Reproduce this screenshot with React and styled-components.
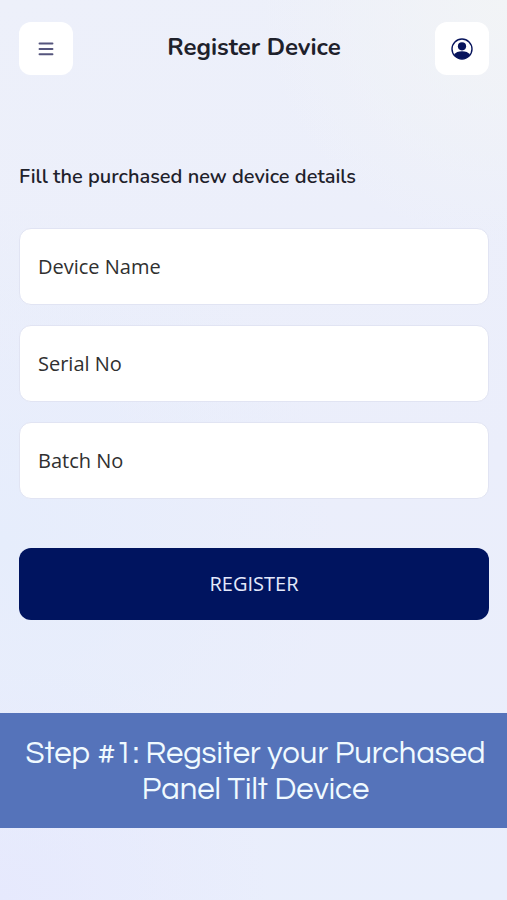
import React from "react";
import styled, { createGlobalStyle } from "styled-components";

const GlobalStyle = createGlobalStyle`
  *, *::before, *::after { box-sizing: border-box; }
  body { margin: 0; background: #e9edfb; }
  button, input { font: inherit; }
`;

const Page = styled.div`
  min-height: 100vh;
  display: flex;
  flex-direction: column;
  font-family: "Open Sans", "Noto Sans", sans-serif;
  color: #1e212b;
  background:
    radial-gradient(circle at 100% 0%, #f2f4f6 0%, rgba(242, 244, 246, 0) 24%),
    radial-gradient(circle at 0% 60%, #e6edfc 0%, rgba(230, 237, 252, 0) 45%),
    radial-gradient(circle at 0% 100%, #e6e9fd 0%, rgba(230, 233, 253, 0) 26%),
    linear-gradient(170deg, #edf0fa 0%, #ebeefb 55%, #e9eefc 100%);
`;

const Header = styled.header`
  display: flex;
  align-items: center;
  justify-content: space-between;
  padding: 22px 18px 0 19px;
`;

const IconButton = styled.button`
  display: grid;
  place-items: center;
  width: 54px;
  height: 53px;
  padding: 0;
  border: 0;
  border-radius: 12px;
  background: #fff;
  color: ${({ $color }) => $color};
  cursor: pointer;
`;

const Title = styled.h1`
  margin: 0 0 4px;
  font-family: Nunito, "Open Sans", sans-serif;
  font-size: 24px;
  line-height: 32px;
  font-weight: 700;
`;

const Form = styled.form`
  display: flex;
  flex-direction: column;
  padding: 88px 18px 0 19px;
`;

const FormTitle = styled.h2`
  margin: 0 0 37px;
  font-family: Nunito, "Open Sans", sans-serif;
  font-size: 20px;
  line-height: 28px;
  font-weight: 600;
`;

const Fields = styled.div`
  display: grid;
  gap: 20px;
`;

const Field = styled.input`
  width: 100%;
  height: 77px;
  padding: 0 18px;
  border: 1px solid #e1e4f3;
  border-radius: 12px;
  background: #fff;
  color: #303030;
  font-size: 20px;

  &::placeholder { color: #303030; opacity: 1; }
`;

const SubmitButton = styled.button`
  height: 72px;
  margin-top: 49px;
  padding: 0 16px 2px;
  border: 0;
  border-radius: 12px;
  background: #00145f;
  color: #e4e9fb;
  font-size: 20px;
  cursor: pointer;
`;

const Caption = styled.p`
  margin: 93px 0 0;
  padding: 23px 16px 20px 20px;
  background: #5573ba;
  color: #f0faff;
  font-family: "Century Gothic", Questrial, "Didact Gothic", sans-serif;
  font-size: 31px;
  line-height: 36px;
  font-weight: 400;
  text-align: center;
`;

const MenuIcon = () => (
  <svg width="16" height="16" viewBox="0 0 16 16" fill="none" stroke="currentColor" strokeWidth="1.9" strokeLinecap="round" aria-hidden="true">
    <path d="M1.5 2.5h13M1.5 8h13M1.5 13.3h13" />
  </svg>
);

const ProfileIcon = () => (
  <svg width="22" height="22" viewBox="0 0 22 22" aria-hidden="true">
    <clipPath id="profile-disc"><circle cx="11" cy="11" r="10" /></clipPath>
    <circle cx="11" cy="8.3" r="4.1" fill="currentColor" />
    <path d="M3 17c1.5-2.8 4.5-3.8 8-3.8s6.5 1 8 3.8V22H3z" fill="currentColor" clipPath="url(#profile-disc)" />
    <circle cx="11" cy="11" r="10" fill="none" stroke="currentColor" strokeWidth="1.4" />
  </svg>
);

const fields = [
  { name: "deviceName", label: "Device Name" },
  { name: "serialNo", label: "Serial No" },
  { name: "batchNo", label: "Batch No" },
];

export default function App() {
  return (
    <Page>
      <GlobalStyle />
      <Header>
        <IconButton type="button" aria-label="Menu" $color="#55557d"><MenuIcon /></IconButton>
        <Title>Register Device</Title>
        <IconButton type="button" aria-label="Profile" $color="#07145c"><ProfileIcon /></IconButton>
      </Header>
      <Form onSubmit={(event) => event.preventDefault()}>
        <FormTitle>Fill the purchased new device details</FormTitle>
        <Fields>
          {fields.map(({ name, label }) => (
            <Field key={name} name={name} type="text" placeholder={label} aria-label={label} />
          ))}
        </Fields>
        <SubmitButton type="submit">REGISTER</SubmitButton>
      </Form>
      <Caption>Step #1: Regsiter your Purchased Panel Tilt Device</Caption>
    </Page>
  );
}
